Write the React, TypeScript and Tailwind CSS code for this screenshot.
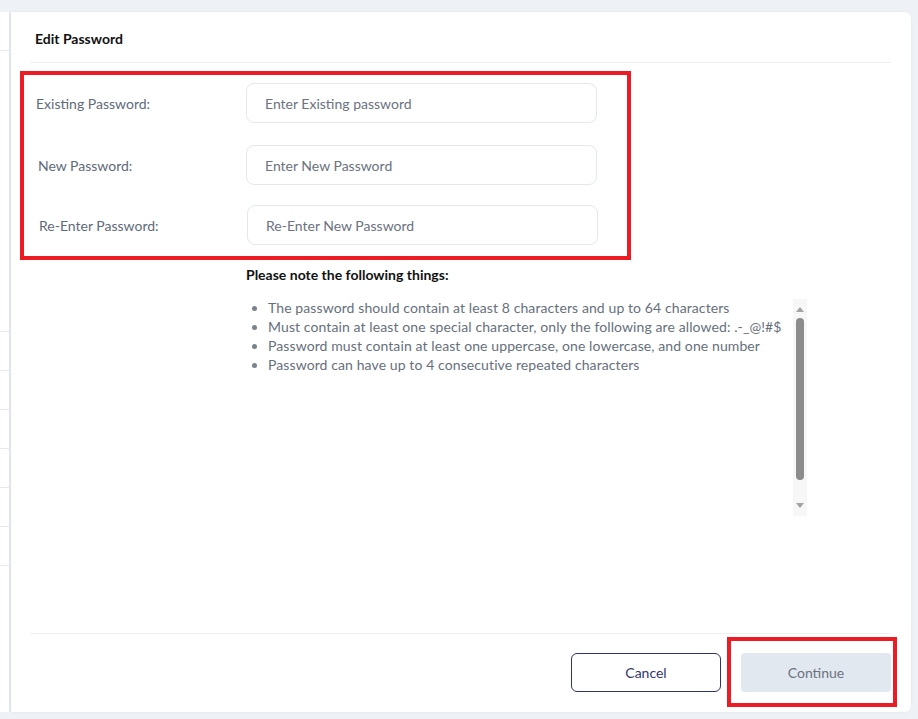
const rows = [
  { label: 'Existing Password:', placeholder: 'Enter Existing password', lx: 'pl-[5px]', ix: 'ml-0' },
  { label: 'New Password:', placeholder: 'Enter New Password', lx: 'pl-[7px]', ix: 'ml-0' },
  { label: 'Re-Enter Password:', placeholder: 'Re-Enter New Password', lx: 'pl-[8px]', ix: 'ml-[1px]' },
];

const notes = [
  'The password should contain at least 8 characters and up to 64 characters',
  'Must contain at least one special character, only the following are allowed: .-_@!#$',
  'Password must contain at least one uppercase, one lowercase, and one number',
  'Password can have up to 4 consecutive repeated characters',
];

const App = () => {
  return (
    <div
      className="h-[719px] w-[918px] overflow-hidden bg-[#eef1f5] pt-[12px]"
      style={{ fontFamily: 'Lato, "Open Sans", sans-serif' }}
    >
      <div className="flex h-[700px]">
        {/* table peeking out behind the modal */}
        <div className="w-[11px] shrink-0 border-r-2 border-[#e3e8f0] bg-white">
          <div className="h-[39px] border-b border-[#e5e8ee]" />
          <div className="h-[280px]" />
          {[0, 1, 2, 3, 4, 5, 6].map(i => (
            <div key={i} className="h-[39px] border-t border-[#e5e8ee]" />
          ))}
        </div>

        {/* modal card */}
        <div className="flex w-[900px] flex-col rounded-r-md bg-white px-5 shadow-[0_0_3px_rgba(0,0,0,0.06)]">
          <div className="border-b border-[#eceef1] pb-[13px] pl-[4px] pt-[17px]">
            <h2 className="text-[14px] font-bold leading-5 text-[#111]">Edit Password</h2>
          </div>

          <div className="relative flex-1">
            {/* annotation box */}
            <div className="pointer-events-none absolute left-[-11px] top-[8px] h-[189px] w-[611px] border-4 border-[#ed1c24]" />

            <div className="flex flex-col pt-[20px]">
              {rows.map((r, i) => (
                <div key={r.label} className={`flex items-center ${i === 1 ? 'mt-[22px]' : i === 2 ? 'mt-[20px]' : ''}`}>
                  <label className={`w-[215px] text-[14px] text-[#5e6a79] ${r.lx}`}>{r.label}</label>
                  <input
                    placeholder={r.placeholder}
                    className={`h-10 w-[351px] rounded-lg border border-[#e3e8ef] bg-white px-[18px] text-[14px] text-[#333] outline-none placeholder:text-[#6b7280] ${r.ix}`}
                  />
                </div>
              ))}
            </div>

            <div className="ml-[215px] mt-[20px]">
              <p className="text-[14px] font-bold leading-5 text-[#111]">Please note the following things:</p>
              <div className="mt-[14px] flex h-[217px] w-[561px]">
                <ul className="-mt-[1px] flex-1 list-disc pl-[22px] text-[14px] leading-[19px] tracking-[0.1px] text-[#66707c] marker:text-[#7a828c]">
                  {notes.map(n => (
                    <li key={n}>{n}</li>
                  ))}
                </ul>
                {/* scrollbar */}
                <div className="flex w-[14px] flex-col items-center bg-[#f7f7f7] py-[8px]">
                  <div className="h-0 w-0 border-x-[4px] border-b-[5px] border-x-transparent border-b-[#a3a3a3]" />
                  <div className="mt-[6px] h-[162px] w-[8px] rounded-full bg-[#8c8c8c]" />
                  <div className="flex-1" />
                  <div className="h-0 w-0 border-x-[4px] border-t-[5px] border-x-transparent border-t-[#a3a3a3]" />
                </div>
              </div>
            </div>
          </div>

          <div className="relative flex justify-end gap-5 border-t border-[#eceef1] pb-[20px] pt-[19px]">
            <button className="h-[39px] w-[150px] rounded-md border border-[#2c3272] bg-white text-[14px] text-[#30366e]">
              Cancel
            </button>
            <button className="h-[39px] w-[150px] rounded bg-[#e2e8f0] text-[14px] text-[#6b7280]">
              Continue
            </button>
            {/* annotation box */}
            <div className="pointer-events-none absolute right-[-6px] top-[3px] h-[70px] w-[170px] border-4 border-[#ed1c24]" />
          </div>
        </div>
      </div>
    </div>
  );
};

export default App;
